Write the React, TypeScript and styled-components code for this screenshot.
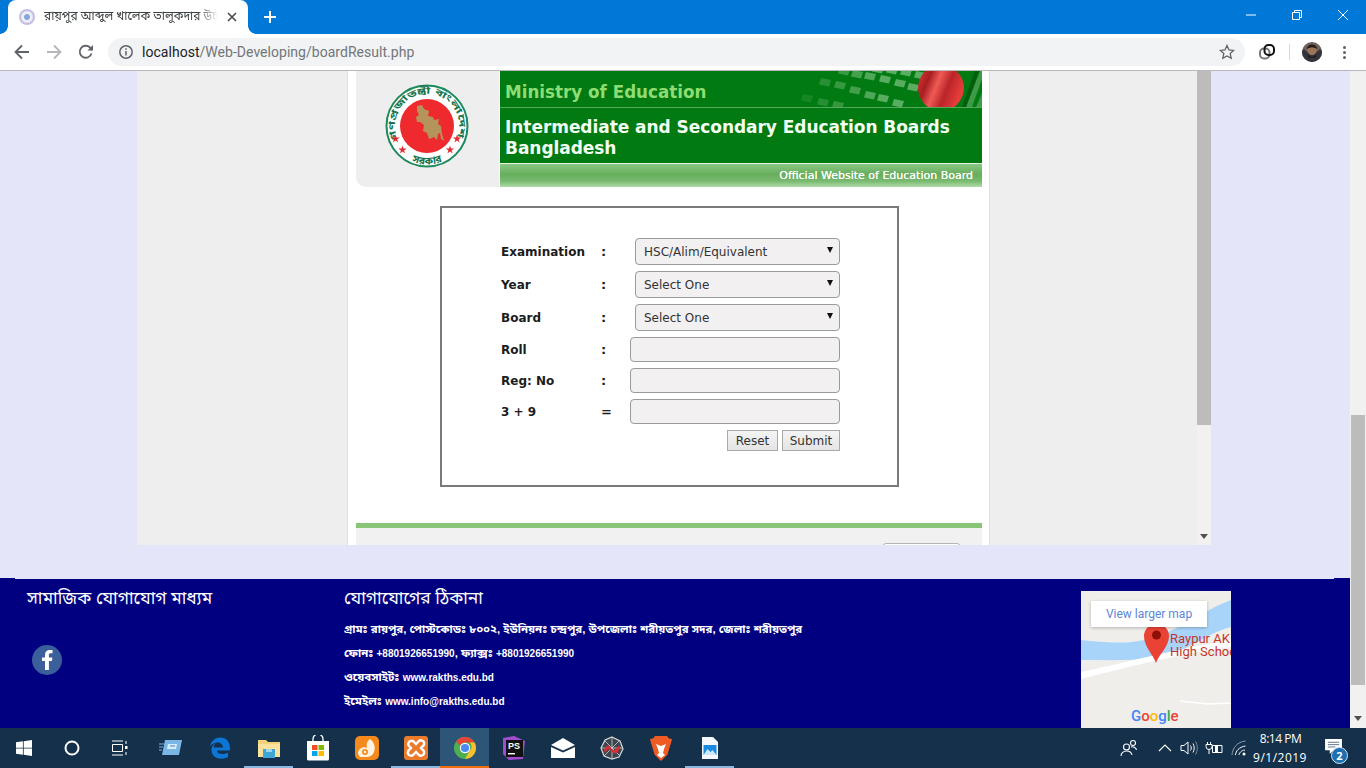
import React from 'react';
import styled, { createGlobalStyle } from 'styled-components';

const bangla = `"Noto Sans Bengali", "Noto Sans", "Liberation Sans", sans-serif`;

const GlobalStyle = createGlobalStyle`
  html, body {
    margin: 0;
    width: 1366px;
    height: 768px;
    overflow: hidden;
    font-family: "Liberation Sans", sans-serif;
  }
  * { box-sizing: border-box; }
`;

const Seal: React.FC = () => (
  <svg width="84" height="84" viewBox="0 0 84 84">
    <defs>
      <path id="sealTop" d="M 12.800 55 A 32 32 0 1 1 71.200 55" />
      <path id="sealBottom" d="M 22 75 A 39 39 0 0 0 62 75" />
    </defs>
    <circle cx="42" cy="42" r="40.500" fill="#fff" stroke="#1c8a5c" strokeWidth="2" />
    <circle cx="42" cy="42" r="27" fill="#ee2a2e" />
    <text fontFamily={bangla} fontSize="9" fontWeight="700" fill="#16754e">
      <textPath href="#sealTop" textLength="125" lengthAdjust="spacingAndGlyphs">গণপ্রজাতন্ত্রী বাংলাদেশ</textPath>
    </text>
    <text fontFamily={bangla} fontSize="10.500" fontWeight="700" fill="#16754e" textAnchor="middle">
      <textPath href="#sealBottom" startOffset="50%">সরকার</textPath>
    </text>
    <path
      transform="translate(4 2)"
      d="M28 20l5-1 2 4 5 2-1 5 5 1 1 3 5-1-1 5 3 2 1 8 2 7-3-2-1-6-2 1-1 6-3-3-5 2-2-6-4-2 1-6-4-3-3 0-1-5 3-2-2-4z"
      fill="#b4945a"
    />
    {[[10.500, 54.500], [17.500, 65.500], [72, 54.500], [65, 65.500]].map(([x, y]) => (
      <path
        key={x}
        transform={`translate(${x} ${y})`}
        d="M0-4l1 3h3.200l-2.600 1.900 1 3.100-2.600-1.900-2.600 1.900 1-3.100-2.600-1.900h3.200z"
        fill="#e52b30"
      />
    ))}
  </svg>
);

const KEYS = [
  [67, 27], [83, 31], [98, 34],
  [85, 11], [100, 14], [115, 19], [130, 24], [143, 27], [158, 32],
  [104, 0], [117, 3], [130, 5], [145, 8], [160, 12], [173, 16],
  [138, -2], [152, -1], [166, 1], [180, 4],
];

const BannerArt: React.FC = () => (
  <svg width="242" height="36" viewBox="0 0 242 36">
    <defs>
      <linearGradient id="ballStripes" x1="0" y1="0" x2="1" y2="0.4">
        <stop offset="0" stopColor="#e23b36" />
        <stop offset="0.3" stopColor="#a81e22" />
        <stop offset="0.5" stopColor="#f05a55" />
        <stop offset="0.72" stopColor="#b92528" />
        <stop offset="1" stopColor="#e63c3a" />
      </linearGradient>
    </defs>
    {KEYS.map(([x, y]) => (
      <path
        key={`${x}-${y}`}
        transform={`translate(${x} ${y})`}
        d="M-4-4l10 2-2 6.500-10-2z"
        fill="#b0e0b0"
        opacity={Math.min(0.1 + (x - 60) * 0.005, 0.5)}
      />
    ))}
    <circle cx="201" cy="17" r="23" fill="url(#ballStripes)" />
    <path d="M226 36l14-36h2v8l-10 28zM236 36l6-14v14z" fill="#3f9a48" />
    <path d="M222 36l13-36h4l-13 36z" fill="#045e0c" />
  </svg>
);

const WindowsIcon = () => (
  <svg width="16" height="16" viewBox="0 0 16 16" fill="#fff">
    <path d="M0 2.300l6.900-1v6.400H0zM7.700 1.200L16 0v7.700H7.700zM0 8.400h6.900v6.400l-6.900-1zM7.700 8.400H16V16l-8.300-1.200z" />
  </svg>
);

const CortanaIcon = () => (
  <svg width="16" height="16" viewBox="0 0 16 16">
    <circle cx="8" cy="8" r="6.500" fill="none" stroke="#fff" strokeWidth="2" />
  </svg>
);

const TaskViewIcon = () => (
  <svg width="18" height="16" viewBox="0 0 18 16" fill="none" stroke="#fff" strokeWidth="1">
    <path d="M1 1h11M1 15h11M1.500 4.500h10v7h-10zM15 1v3M15 12v3" />
    <rect x="14" y="6" width="2.500" height="3" fill="#fff" stroke="none" />
  </svg>
);

const AppIcon = () => (
  <svg width="24" height="20" viewBox="0 0 24 20">
    <path d="M6 2h17l-3 15H3z" fill="#7ab6e6" />
    <path d="M0 6h5M0 9h4M0 12h3" stroke="#7ab6e6" strokeWidth="1" />
    <path d="M9 6h9l-1 5H8z" fill="#dcecf8" />
    <path d="M11 8h5" stroke="#5a94c8" strokeWidth="1.200" />
  </svg>
);

const EdgeIcon = () => (
  <svg width="22" height="22" viewBox="0 0 22 22">
    <path
      d="M1 9C2.500 3.500 6.500 0.500 11.500 0.500 17.500 0.500 21 5 21 11.500v2H8c.2 3.500 5.500 5 11 2v4.800c-7 3-16.500 1.200-16.500-7.300 0-3 1.500-5.500 4-7-1.500 2-1.800 3.500-1.800 4.500h9.300c0-5-7-7.500-13-1.500z"
      fill="#0b76d6"
    />
  </svg>
);

const ExplorerIcon = () => (
  <svg width="22" height="20" viewBox="0 0 22 20">
    <path d="M0 2h8l2 2h12v15H0z" fill="#f3d27a" />
    <path d="M0 6h22v13H0z" fill="#fae29c" />
    <path d="M5 11h12v9H5z" fill="#3fa6d8" />
    <path d="M8 11h6v3H8z" fill="#9bd7ef" />
  </svg>
);

const StoreIcon = () => (
  <svg width="24" height="26" viewBox="0 0 24 26">
    <path d="M7 7V4a5 5 0 0 1 10 0v3" fill="none" stroke="#fff" strokeWidth="1.300" />
    <path d="M1 6h22v18a1.500 1.500 0 0 1-1.500 1.500h-19A1.500 1.500 0 0 1 1 24z" fill="#fff" />
    <path d="M6 10h5.500v5H6z" fill="#f25022" />
    <path d="M12.500 10H18v5h-5.500z" fill="#7fba00" />
    <path d="M6 16h5.500v5H6z" fill="#00a4ef" />
    <path d="M12.500 16H18v5h-5.500z" fill="#ffb900" />
  </svg>
);

const UcIcon = () => (
  <svg width="24" height="24" viewBox="0 0 24 24">
    <rect width="24" height="24" rx="5" fill="#f48a1c" />
    <path d="M3 18c0-5 5-8 9-6-1-4 0-7 3-9 4 3 6 8 4 13-1 3-4 5-8 5H5z" fill="#fff3e0" />
    <circle cx="10" cy="16" r="3" fill="#f48a1c" />
    <circle cx="10" cy="16" r="1.300" fill="#fff3e0" />
  </svg>
);

const XamppIcon = () => (
  <svg width="24" height="24" viewBox="0 0 24 24">
    <rect width="24" height="24" rx="3" fill="#ea7b2c" />
    <path
      d="M7 5a3 3 0 0 0-2 5l2 2-2 2a3 3 0 0 0 4 5l3-3 3 3a3 3 0 0 0 4-5l-2-2 2-2a3 3 0 0 0-4-5l-3 3-3-3z"
      fill="none"
      stroke="#fff"
      strokeWidth="2.400"
    />
  </svg>
);

const ChromeIcon = () => (
  <svg width="24" height="24" viewBox="0 0 24 24">
    <circle cx="12" cy="12" r="11" fill="#4caf50" />
    <path d="M12 1a11 11 0 0 1 9.500 5.500H12a5.500 5.500 0 0 0-5 3L3.200 5.300A11 11 0 0 1 12 1z" fill="#e94335" />
    <path d="M21.500 6.500A11 11 0 0 1 12 23l4.700-8.200a5.500 5.500 0 0 0 0-8.300z" fill="#fbc02d" />
    <circle cx="12" cy="12" r="5.200" fill="#fff" />
    <circle cx="12" cy="12" r="4.100" fill="#4a8af4" />
  </svg>
);

const PhpStormIcon = () => (
  <svg width="24" height="24" viewBox="0 0 24 24">
    <path d="M1 2l11-2 11 5-2 18-14 1-6-6z" fill="#a34cd0" />
    <path d="M4 4h17v17H4z" fill="#111" />
    <text x="6" y="12.500" fontFamily="Liberation Sans, sans-serif" fontSize="9" fontWeight="700" fill="#fff">PS</text>
    <path d="M6 17h7v1.400H6z" fill="#fff" />
  </svg>
);

const MailIcon = () => (
  <svg width="24" height="20" viewBox="0 0 24 20" fill="#fff">
    <path d="M12 0l12 7-12 5.500L0 7z" />
    <path d="M0 9l12 5.500L24 9v11H0z" />
  </svg>
);

const SpiderIcon = () => (
  <svg width="24" height="24" viewBox="0 0 24 24">
    <path d="M12 1l8 4 3 8-4 8-7 2-8-3-3-8 4-8z" fill="#3b4650" stroke="#d8d8d8" strokeWidth="1.200" />
    <path d="M12 1v22M1 12h22M4 4l16 16M20 4L4 20" stroke="#cfcfcf" strokeWidth="0.800" />
    <path d="M4 14c3-6 5-5 7-2s4 3 8-3l1 4c-4 6-7 5-9 2s-3-2-6 2z" fill="#d32f35" />
  </svg>
);

const BraveIcon = () => (
  <svg width="22" height="25" viewBox="0 0 22 25">
    <path d="M5 0h12l2 2.500 3 .500-1 4-1 3-2.500 8.500L11 25l-6.500-6.500L2 10 1 7 0 3l3-.500z" fill="#f05a24" />
    <path d="M6 8l5 2 5-2-2 5-1 4 2 2-4 3-4-3 2-2-1-4z" fill="#fff" />
  </svg>
);

const FileIcon = () => (
  <svg width="18" height="22" viewBox="0 0 18 22">
    <path d="M1 0h11l5 5v17H1z" fill="#f4f8fc" />
    <path d="M2.500 8h13v10h-13z" fill="#1a8ae0" />
    <path d="M2.500 18l4-6 3 3 2-2 4 5z" fill="#cfe9fb" />
  </svg>
);

const PeopleIcon = () => (
  <svg width="18" height="18" viewBox="0 0 18 18" fill="none" stroke="#fff" strokeWidth="1.100">
    <circle cx="6.500" cy="8" r="3" />
    <path d="M1 17c0-3 2.500-5 5.500-5s5 1.500 5.500 4" />
    <circle cx="13" cy="4" r="2.500" />
    <path d="M11 8c2-.6 5 0 5.500 3" />
  </svg>
);

const CaretIcon = () => (
  <svg width="14" height="8" viewBox="0 0 14 8" fill="none" stroke="#fff" strokeWidth="1.100">
    <path d="M1 7l6-6 6 6" />
  </svg>
);

const VolumeIcon = () => (
  <svg width="18" height="16" viewBox="0 0 18 16" fill="none" stroke="#fff" strokeWidth="1">
    <path d="M1 5.500h3L8 2v12l-4-3.500H1z" />
    <path d="M10.500 5.500c1 1.500 1 3.500 0 5M13 3.500c1.600 2.700 1.600 6.300 0 9" />
    <path d="M15.500 1.500c2.400 4 2.400 9 0 13" stroke="#7b8b9a" />
  </svg>
);

const BatteryIcon = () => (
  <svg width="18" height="14" viewBox="0 0 18 14" fill="none" stroke="#fff" strokeWidth="1">
    <path d="M7.500 4.500h9.500v7H7.500z" />
    <path d="M10 5h3v6h-3z" fill="#fff" stroke="none" />
    <path d="M1 3.500h6v2a3 3 0 0 1-6 0zM2.500 1v2.500M5.500 1v2.500M4 8.500V13" />
  </svg>
);

const WifiIcon = () => (
  <svg width="16" height="16" viewBox="0 0 16 16" fill="none" stroke="#fff" strokeWidth="1">
    <path d="M1 15C1.500 8 6 2 14.500 1" stroke="#8d9cab" />
    <path d="M4.500 15c.3-4 3.600-8 10-9" />
    <path d="M8 15c.2-2 2-4.500 6-5" />
    <circle cx="13" cy="14" r="1.500" fill="#fff" stroke="none" />
  </svg>
);

const Chrome: React.FC = () => (
  <ChromeBar>
    <TabStrip>
      <Tab>
        <Favicon />
        <TabTitle>রায়পুর আব্দুল খালেক তালুকদার উচ্চ বিদ্যালয়</TabTitle>
        <svg width="10" height="10" viewBox="0 0 10 10" stroke="#4a4d51" strokeWidth="1.700">
          <path d="M1 1l8 8M9 1l-8 8" />
        </svg>
      </Tab>
      <NewTab>
        <svg width="12" height="12" viewBox="0 0 12 12" stroke="#fff" strokeWidth="2">
          <path d="M6 0v12M0 6h12" />
        </svg>
      </NewTab>
      <WindowControls>
        <WindowButton>
          <svg width="10" height="2" viewBox="0 0 10 2" stroke="#fff"><path d="M0 1h10" /></svg>
        </WindowButton>
        <WindowButton>
          <svg width="10" height="10" viewBox="0 0 10 10" fill="none" stroke="#fff">
            <path d="M.5 2.500h7v7h-7zM2.500 2.500V.5h7v7h-2" />
          </svg>
        </WindowButton>
        <WindowButton>
          <svg width="10" height="10" viewBox="0 0 10 10" stroke="#fff"><path d="M0 0l10 10M10 0L0 10" /></svg>
        </WindowButton>
      </WindowControls>
    </TabStrip>
    <Toolbar>
      <NavButton>
        <svg width="16" height="16" viewBox="0 0 16 16" fill="none" stroke="#5f6368" strokeWidth="1.800">
          <path d="M15 8H2M8 1.500L1.500 8 8 14.500" />
        </svg>
      </NavButton>
      <NavButton>
        <svg width="16" height="16" viewBox="0 0 16 16" fill="none" stroke="#b4b6b9" strokeWidth="1.800">
          <path d="M1 8h13M8 1.500L14.500 8 8 14.500" />
        </svg>
      </NavButton>
      <NavButton>
        <svg width="16" height="16" viewBox="0 0 16 16" fill="none" stroke="#5f6368" strokeWidth="1.800">
          <path d="M13.500 9.500A6 6 0 1 1 12 3.500L14.500 6" />
          <path d="M15 1v5.500H9.500z" fill="#5f6368" stroke="none" />
        </svg>
      </NavButton>
      <AddressBar>
        <svg width="16" height="16" viewBox="0 0 16 16" fill="none" stroke="#5f6368" strokeWidth="1.500">
          <circle cx="8" cy="8" r="6.200" />
          <path d="M8 7v4.500M8 4.200v1.600" />
        </svg>
        <UrlText>localhost<UrlPath>/Web-Developing/boardResult.php</UrlPath></UrlText>
        <svg width="16" height="16" viewBox="0 0 16 16" fill="none" stroke="#5f6368" strokeWidth="1.300">
          <path d="M8 1.500l2 4.400 4.700.5-3.500 3.200 1 4.700L8 11.900l-4.200 2.400 1-4.700L1.300 6.400 6 5.900z" />
        </svg>
      </AddressBar>
      <ExtensionSlot>
        <svg width="16" height="16" viewBox="0 0 16 16" fill="none" strokeWidth="2">
          <rect x="1" y="4.500" width="9.500" height="10" rx="4" stroke="#777" />
          <rect x="5.500" y="1" width="9.500" height="10" rx="4" stroke="#111" />
        </svg>
      </ExtensionSlot>
      <ToolbarDivider />
      <ExtensionSlot>
        <svg width="20" height="20" viewBox="0 0 20 20">
          <circle cx="10" cy="10" r="10" fill="#6f6058" />
          <path d="M0 10a10 10 0 0 0 20 0c0-2-2-4-3-2-2 4-12 4-14 0-1-2-3 0-3 2z" fill="#33343c" />
          <circle cx="10" cy="8.500" r="4.600" fill="#9a755a" />
          <path d="M5 7c0-6 10-6 10 0-3-2-7-2-10 0z" fill="#241f1c" />
          <path d="M5.500 11c2 5 7 5 9 0l-1 5H6.500z" fill="#241f1c" />
        </svg>
      </ExtensionSlot>
      <MenuDots>
        <span /><span /><span />
      </MenuDots>
    </Toolbar>
  </ChromeBar>
);

const FIELDS = [
  { label: 'Examination', mark: ':', kind: 'select', value: 'HSC/Alim/Equivalent' },
  { label: 'Year', mark: ':', kind: 'select', value: 'Select One' },
  { label: 'Board', mark: ':', kind: 'select', value: 'Select One' },
  { label: 'Roll', mark: ':', kind: 'input', value: '' },
  { label: 'Reg: No', mark: ':', kind: 'input', value: '' },
  { label: '3 + 9', mark: '=', kind: 'input', value: '' },
];

const ResultForm: React.FC = () => (
  <FormBox>
    <FormInner>
      {FIELDS.map(field => (
        <FormRow key={field.label}>
          <FieldLabel>{field.label}</FieldLabel>
          <FieldMark>{field.mark}</FieldMark>
          {field.kind === 'select' ? (
            <SelectWrap>
              <FieldSelect defaultValue={field.value}>
                <option>{field.value}</option>
              </FieldSelect>
              <SelectCaret />
            </SelectWrap>
          ) : (
            <FieldInput />
          )}
        </FormRow>
      ))}
      <ButtonRow>
        <FormButton type="button" $width={51}>Reset</FormButton>
        <FormButton type="button" $width={58}>Submit</FormButton>
      </ButtonRow>
    </FormInner>
  </FormBox>
);

const MapFrame: React.FC = () => (
  <MapBox>
    <svg width="150" height="137" viewBox="0 0 150 137">
      <rect width="150" height="137" fill="#f0eeeb" />
      <path d="M0 49c30 3 55 6 85-7 25-11 45-26 65-33v27c-30 8-45 27-75 31-25 3-50 2-75 2z" fill="#a9d4fa" />
      <path d="M0 81c40-8 80-20 150-32v7c-60 8-110 22-150 32z" fill="#fff" />
      <path d="M99 110l28 3 23-1" fill="none" stroke="#fff" strokeWidth="1.500" />
      <path d="M75 72c-3-9-12-16-12-27a12.500 12.500 0 0 1 25 0c0 11-10 18-13 27z" fill="#ea4335" />
      <circle cx="75.500" cy="44" r="4.500" fill="#8e1007" />
      <text x="89" y="52" fontFamily="Roboto, sans-serif" fontSize="13" fill="#c5352a">Raypur AK</text>
      <text x="89" y="65" fontFamily="Roboto, sans-serif" fontSize="13" fill="#c5352a">High Schoo</text>
      <text x="50" y="130" fontFamily="Roboto, sans-serif" fontSize="15" fontWeight="500">
        <tspan fill="#4285f4">G</tspan>
        <tspan fill="#ea4335">o</tspan>
        <tspan fill="#fbbc05">o</tspan>
        <tspan fill="#4285f4">g</tspan>
        <tspan fill="#34a853">l</tspan>
        <tspan fill="#ea4335">e</tspan>
      </text>
    </svg>
    <MapCard>View larger map</MapCard>
  </MapBox>
);

const CONTACT_LINES = [
  'গ্রামঃ রায়পুর, পোস্টকোডঃ ৮০০২, ইউনিয়নঃ চন্দ্রপুর, উপজেলাঃ শরীয়তপুর সদর, জেলাঃ শরীয়তপুর',
  'ফোনঃ +8801926651990, ফ্যাক্সঃ +8801926651990',
  'ওয়েবসাইটঃ www.rakths.edu.bd',
  'ইমেইলঃ www.info@rakths.edu.bd',
];

const PageFooter: React.FC = () => (
  <Footer>
    <SocialColumn>
      <FooterHeading>সামাজিক যোগাযোগ মাধ্যম</FooterHeading>
      <FacebookBadge>
        <svg width="11" height="20" viewBox="0 0 11 20" fill="#fff">
          <path d="M3 20V11H0V7.500h3V5C3 1.800 5 0 7.800 0c1.300 0 2.400.1 2.700.1v3.200H8.700C7.200 3.300 6.900 4 6.900 5.100v2.400h3.500l-.5 3.500h-3v9z" />
        </svg>
      </FacebookBadge>
    </SocialColumn>
    <ContactColumn>
      <FooterHeading>যোগাযোগের ঠিকানা</FooterHeading>
      <ContactList>
        {CONTACT_LINES.map(line => (
          <ContactLine key={line}>
            {line.split(/([+\w.@]+)/).map((part, i) =>
              i % 2 ? <LatinRun key={i}>{part}</LatinRun> : part
            )}
          </ContactLine>
        ))}
      </ContactList>
    </ContactColumn>
    <MapFrame />
  </Footer>
);

const TASK_APPS = [
  { id: 'windows', icon: <WindowsIcon />, width: 48 },
  { id: 'cortana', icon: <CortanaIcon />, width: 48 },
  { id: 'taskview', icon: <TaskViewIcon />, width: 48 },
  { id: 'app', icon: <AppIcon />, width: 49, gap: 2 },
  { id: 'edge', icon: <EdgeIcon />, width: 49 },
  { id: 'explorer', icon: <ExplorerIcon />, width: 49, running: true },
  { id: 'store', icon: <StoreIcon />, width: 49 },
  { id: 'uc', icon: <UcIcon />, width: 49 },
  { id: 'xampp', icon: <XamppIcon />, width: 49, running: true },
  { id: 'chrome', icon: <ChromeIcon />, width: 49, active: true },
  { id: 'phpstorm', icon: <PhpStormIcon />, width: 49 },
  { id: 'mail', icon: <MailIcon />, width: 49 },
  { id: 'spider', icon: <SpiderIcon />, width: 49 },
  { id: 'brave', icon: <BraveIcon />, width: 49 },
  { id: 'file', icon: <FileIcon />, width: 49, running: true },
];

const Taskbar: React.FC = () => (
  <TaskbarWrap>
    {TASK_APPS.map(app => (
      <TaskSlot
        key={app.id}
        $width={app.width}
        $gap={app.gap || 0}
        $running={!!app.running}
        $active={!!app.active}
      >
        {app.icon}
      </TaskSlot>
    ))}
    <Tray>
      <TraySlot $width={48}><PeopleIcon /></TraySlot>
      <TraySlot $width={24}><CaretIcon /></TraySlot>
      <TraySlot $width={24}><VolumeIcon /></TraySlot>
      <TraySlot $width={25}><BatteryIcon /></TraySlot>
      <TraySlot $width={26}><WifiIcon /></TraySlot>
      <Clock>
        <ClockTime>8:14 PM</ClockTime>
        <ClockDate>9/1/2019</ClockDate>
      </Clock>
      <NotifySlot>
        <svg width="17" height="15" viewBox="0 0 18 16" fill="#fff">
          <path d="M0 0h18v12H9l-4 4v-4H0z" />
          <path d="M3 3.500h12M3 6h12M3 8.500h8" stroke="#14304a" strokeWidth="0.700" />
        </svg>
        <NotifyBadge>2</NotifyBadge>
      </NotifySlot>
    </Tray>
  </TaskbarWrap>
);

export default function App() {
  return (
    <Screen>
      <GlobalStyle />
      <Chrome />
      <Viewport>
        <Page>
          <FrameArea>
            <FrameBody>
              <Panel>
                <BoardHeader>
                  <LogoCell><Seal /></LogoCell>
                  <BannerCell>
                    <MinistryRow>
                      <MinistryText>Ministry of Education</MinistryText>
                      <BannerArtSlot><BannerArt /></BannerArtSlot>
                    </MinistryRow>
                    <BoardTitle>Intermediate and Secondary Education Boards Bangladesh</BoardTitle>
                    <OfficialBand>Official Website of Education Board</OfficialBand>
                  </BannerCell>
                </BoardHeader>
                <ResultForm />
                <GreenRule />
                <PanelFoot><FootTab /></PanelFoot>
              </Panel>
            </FrameBody>
            <FrameScrollbar>
              <FrameThumb />
              <ScrollArrow />
            </FrameScrollbar>
          </FrameArea>
          <PageFooter />
        </Page>
        <OuterScrollbar>
          <OuterThumb />
          <ScrollArrow />
        </OuterScrollbar>
      </Viewport>
      <Taskbar />
    </Screen>
  );
}

const Screen = styled.div`
  width: 1366px;
  height: 768px;
  display: flex;
  flex-direction: column;
  overflow: hidden;
`;

const ChromeBar = styled.div`
  flex: none;
  height: 71px;
  display: flex;
  flex-direction: column;
  border-bottom: 1px solid #b8b8bc;
`;

const TabStrip = styled.div`
  height: 34px;
  background: #0078d7;
  display: flex;
  align-items: stretch;
  padding-left: 8px;
`;

const Tab = styled.div`
  position: relative;
  width: 240px;
  background: #fff;
  border-radius: 8px 8px 0 0;
  display: flex;
  align-items: center;
  padding: 0 11px 0 11px;
  gap: 9px;

  &::before, &::after {
    content: '';
    position: absolute;
    bottom: 0;
    width: 8px;
    height: 8px;
  }
  &::before {
    left: -8px;
    background: radial-gradient(circle at 0 0, transparent 7.5px, #fff 8px);
  }
  &::after {
    right: -8px;
    background: radial-gradient(circle at 100% 0, transparent 7.5px, #fff 8px);
  }
`;

const Favicon = styled.span`
  flex: none;
  width: 16px;
  height: 16px;
  border-radius: 50%;
  background: radial-gradient(circle, #86a6dc 0 2.500px, #f0f1f8 3.500px 5px, #c3bfe4 6.500px);
`;

const TabTitle = styled.span`
  flex: 1;
  min-width: 0;
  font-family: ${bangla};
  font-size: 12px;
  line-height: 16px;
  color: #3c4043;
  white-space: nowrap;
  overflow: hidden;
  -webkit-mask-image: linear-gradient(90deg, #000 88%, transparent);
  mask-image: linear-gradient(90deg, #000 88%, transparent);
`;

const NewTab = styled.div`
  width: 28px;
  margin-left: 8px;
  display: flex;
  align-items: center;
  justify-content: center;
`;

const WindowControls = styled.div`
  margin-left: auto;
  display: flex;
`;

const WindowButton = styled.div`
  width: 46px;
  height: 29px;
  display: flex;
  align-items: center;
  justify-content: center;
`;

const Toolbar = styled.div`
  height: 36px;
  background: #fff;
  display: flex;
  align-items: center;
  padding-left: 6px;
`;

const NavButton = styled.div`
  width: 32px;
  height: 28px;
  display: flex;
  align-items: center;
  justify-content: center;
`;

const AddressBar = styled.div`
  width: 1137px;
  height: 28px;
  margin-left: 6px;
  padding: 0 10px;
  border-radius: 14px;
  background: #f1f3f4;
  display: flex;
  align-items: center;
  gap: 8px;
`;

const UrlText = styled.span`
  flex: 1;
  font-family: Roboto, "Liberation Sans", sans-serif;
  font-size: 14px;
  letter-spacing: 0.03px;
  color: #202124;
`;

const UrlPath = styled.span`
  color: #72767a;
`;

const ExtensionSlot = styled.div`
  width: 44px;
  height: 28px;
  display: flex;
  align-items: center;
  justify-content: center;
`;

const ToolbarDivider = styled.div`
  width: 1px;
  height: 16px;
  background: #d8d8da;
`;

const MenuDots = styled.div`
  width: 20px;
  display: flex;
  flex-direction: column;
  align-items: center;
  gap: 2px;

  span {
    width: 3px;
    height: 3px;
    border-radius: 50%;
    background: #5f6368;
  }
`;

const Viewport = styled.div`
  flex: 1;
  min-height: 0;
  display: flex;
`;

const Page = styled.div`
  width: 1350px;
  background: #e4e5f8;
  display: flex;
  flex-direction: column;
`;

const FrameArea = styled.div`
  width: 1074px;
  height: 474px;
  margin-left: 137px;
  display: flex;
  overflow: hidden;
`;

const FrameBody = styled.div`
  width: 1060px;
  background: #eeeeee;
  padding-left: 210px;
`;

const Panel = styled.div`
  width: 643px;
  height: 474px;
  background: #fff;
  border: solid #dfdfdf;
  border-width: 0 1px;
  padding: 0 7px 0 8px;
`;

const BoardHeader = styled.div`
  height: 116px;
  display: flex;
`;

const LogoCell = styled.div`
  width: 143px;
  background: #eeeeee;
  border-bottom-left-radius: 10px;
  margin-right: 1px;
  display: flex;
  align-items: center;
  justify-content: center;
  padding: 0 1px 6px 0;
`;

const BannerCell = styled.div`
  flex: 1;
  display: flex;
  flex-direction: column;
  background: #007a11;
  font-family: "DejaVu Sans", Verdana, sans-serif;
`;

const MinistryRow = styled.div`
  position: relative;
  height: 37px;
  padding: 6px 0 0 5px;
  display: flex;
  align-items: center;
  border-bottom: 1px solid #55a95c;
  overflow: hidden;
`;

const MinistryText = styled.span`
  font-size: 16.750px;
  font-weight: 700;
  color: #8fdc74;
`;

const BannerArtSlot = styled.div`
  position: absolute;
  top: 0;
  right: 0;
  height: 36px;
`;

const BoardTitle = styled.div`
  height: 55px;
  padding: 9px 10px 0 5px;
  font-size: 17px;
  line-height: 21px;
  font-weight: 700;
  letter-spacing: -0.05px;
  color: #f2fff2;
`;

const OfficialBand = styled.div`
  flex: 1;
  border-top: 1px solid #e4f3e0;
  background: linear-gradient(180deg, #8ac784 0%, #66ae5c 45%, #79ba70 75%, #b0dba9 100%);
  color: #fff;
  font-size: 11px;
  line-height: 23px;
  text-align: right;
  padding-right: 9px;
  text-shadow: 0 0 0.6px #fff;
`;

const FormBox = styled.div`
  width: 459px;
  height: 281px;
  margin: 19px 0 36px 84px;
  border: 2px solid #7a7a7a;
  padding: 30px 0 0 59px;
  font-family: "DejaVu Sans", Verdana, sans-serif;
`;

const FormInner = styled.div`
  width: 339px;
  display: flex;
  flex-direction: column;
  gap: 6px;
`;

const FormRow = styled.div`
  display: grid;
  grid-template-columns: 100px 21px 1fr;
  align-items: center;
`;

const FieldLabel = styled.span`
  font-size: 12px;
  font-weight: 700;
  color: #1c1c1c;
`;

const FieldMark = styled.span`
  font-size: 13px;
  font-weight: 700;
  color: #1c1c1c;
`;

const SelectWrap = styled.div`
  position: relative;
  width: 205px;
  height: 27px;
  justify-self: end;
`;

const FieldSelect = styled.select`
  appearance: none;
  width: 100%;
  height: 100%;
  padding: 0 0 0 8px;
  border: 1px solid #9a9a9a;
  border-radius: 4px;
  background: #f2f0f0;
  font-family: "DejaVu Sans", Verdana, sans-serif;
  font-size: 12px;
  color: #333;
`;

const SelectCaret = styled.span`
  position: absolute;
  top: 9px;
  right: 7px;
  width: 0;
  height: 0;
  border: solid transparent;
  border-width: 6px 3px 0;
  border-top-color: #111;
`;

const FieldInput = styled.input`
  width: 210px;
  height: 25px;
  justify-self: end;
  border: 1px solid #9a9a9a;
  border-radius: 4px;
  background: #f2f0f0;
`;

const ButtonRow = styled.div`
  display: flex;
  justify-content: flex-end;
  gap: 4px;
`;

const FormButton = styled.button<{ $width: number }>`
  width: ${props => props.$width}px;
  height: 21px;
  padding: 0;
  border: 1px solid #a9a9a9;
  background: linear-gradient(180deg, #f4f4f4, #e4e4e4);
  font-family: "DejaVu Sans", Verdana, sans-serif;
  font-size: 12px;
  color: #333;
`;

const GreenRule = styled.div`
  height: 5px;
  background: #88c578;
`;

const PanelFoot = styled.div`
  height: 17px;
  background: #f1f1f1;
  padding: 15px 0 0 526px;
`;

const FootTab = styled.div`
  width: 79px;
  height: 8px;
  border: 1px solid #b4b4b4;
  border-radius: 4px 4px 0 0;
  background: #fff;
`;

const FrameScrollbar = styled.div`
  width: 14px;
  background: #f1f1f1;
  display: flex;
  flex-direction: column;
  align-items: center;
  padding-bottom: 6px;
`;

const FrameThumb = styled.div`
  width: 100%;
  height: 354px;
  background: #bcbcbc;
`;

const ScrollArrow = styled.span`
  margin-top: auto;
  width: 0;
  height: 0;
  border: solid transparent;
  border-width: 5px 4px 0;
  border-top-color: #505050;
`;

const OuterScrollbar = styled.div`
  width: 16px;
  background: #f1f1f1;
  display: flex;
  flex-direction: column;
  align-items: center;
  padding-bottom: 7px;
`;

const OuterThumb = styled.div`
  width: 14px;
  height: 270px;
  margin-top: 344px;
  background: #bcbcbc;
`;

const Footer = styled.div`
  height: 150px;
  margin-top: 33px;
  background: linear-gradient(#e4e5f8, #e4e5f8) 15px 0 / 1319px 1px no-repeat, #000080;
  display: flex;
  color: #fff;
  font-family: ${bangla};
`;

const SocialColumn = styled.div`
  width: 344px;
  padding: 10px 0 0 27px;
`;

const FooterHeading = styled.div`
  font-size: 17.400px;
  line-height: 23px;
  white-space: nowrap;
`;

const FacebookBadge = styled.div`
  width: 30px;
  height: 30px;
  margin: 34px 0 0 5px;
  border-radius: 50%;
  background: #3b5f9a;
  display: flex;
  align-items: center;
  justify-content: center;
`;

const ContactColumn = styled.div`
  width: 737px;
  padding-top: 10px;
`;

const ContactList = styled.div`
  margin-top: 6px;
  display: flex;
  flex-direction: column;
`;

const ContactLine = styled.div`
  height: 24px;
  font-family: "Liberation Sans", ${bangla};
  font-size: 11.400px;
  font-weight: 700;
  line-height: 24px;
  white-space: nowrap;
`;

const LatinRun = styled.span`
  font-size: 10px;
`;

const MapBox = styled.div`
  position: relative;
  width: 150px;
  height: 137px;
  margin-top: 13px;
`;

const MapCard = styled.div`
  position: absolute;
  top: 10px;
  left: 10px;
  width: 116px;
  height: 26px;
  background: #fff;
  box-shadow: 0 1px 3px rgba(0, 0, 0, 0.25);
  color: #5b86d9;
  font-family: Roboto, sans-serif;
  font-size: 12px;
  line-height: 26px;
  text-align: center;
`;

const TaskbarWrap = styled.div`
  flex: none;
  height: 40px;
  background: #14304a;
  display: flex;
`;

const TaskSlot = styled.div<{ $width: number; $gap: number; $running: boolean; $active: boolean }>`
  width: ${props => props.$width}px;
  margin-left: ${props => props.$gap}px;
  display: flex;
  align-items: center;
  justify-content: center;
  background: ${props => (props.$active ? '#2d5578' : 'transparent')};
  box-shadow: ${props =>
    props.$active
      ? 'inset 0 -2px 0 #f0700f'
      : props.$running
        ? 'inset 0 -2px 0 #8ab8de'
        : 'none'};
`;

const Tray = styled.div`
  margin-left: auto;
  padding-right: 6px;
  display: flex;
`;

const TraySlot = styled.div<{ $width: number }>`
  width: ${props => props.$width}px;
  display: flex;
  align-items: center;
  justify-content: center;
`;

const Clock = styled.div`
  width: 54px;
  display: flex;
  flex-direction: column;
  align-items: center;
  justify-content: center;
  color: #fff;
  font-family: "Open Sans", sans-serif;
  font-size: 12px;
  line-height: 19px;
`;

const ClockTime = styled.span`
  letter-spacing: -0.5px;
  padding-left: 3px;
`;

const ClockDate = styled.span`
  letter-spacing: 0.5px;
  padding-left: 2px;
`;

const NotifySlot = styled.div`
  position: relative;
  width: 54px;
  display: flex;
  align-items: center;
  justify-content: center;
  padding-bottom: 4px;
`;

const NotifyBadge = styled.span`
  position: absolute;
  top: 19px;
  left: 25px;
  width: 17px;
  height: 17px;
  border-radius: 50%;
  background: #1d6fb2;
  border: 1px solid #cfe2f2;
  color: #fff;
  font-family: "Open Sans", sans-serif;
  font-size: 11px;
  font-weight: 700;
  line-height: 15px;
  text-align: center;
`;
